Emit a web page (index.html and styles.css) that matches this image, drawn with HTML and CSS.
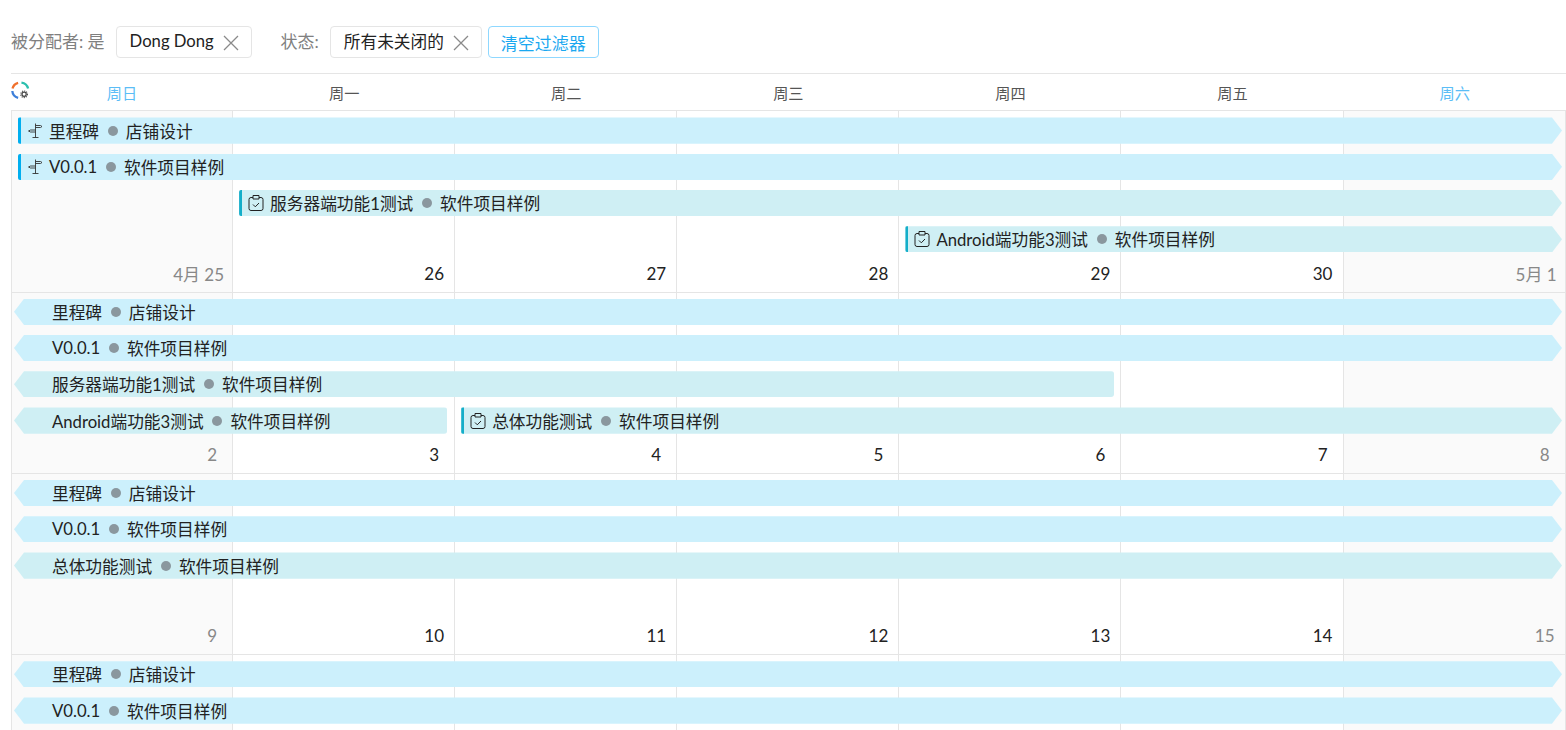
FILE: index.html
```html
<!DOCTYPE html>
<html lang="zh">
<head>
<meta charset="utf-8">
<title>日历</title>
<link rel="stylesheet" href="styles.css">
</head>
<body>
<svg class="defs" width="0" height="0" aria-hidden="true">
  <symbol id="sign" viewBox="0 0 16 16">
    <path d="M8.500 0.500v14M5.500 14.500h6M8.500 2.500h5l1.500 1-1.500 1h-5M8.500 7h-5L1.500 8l2 1h5" fill="none" stroke="#333" stroke-width="0.900"/>
  </symbol>
  <symbol id="task" viewBox="0 0 16 16">
    <path d="M5 2.500H3A2 2 0 0 0 1 4.500v9A2 2 0 0 0 3 15.500h10A2 2 0 0 0 15 13.500v-9A2 2 0 0 0 13 2.500h-2M5 .5h6v3.500H5zM5 9.500l2.300 2.300L11 8" fill="none" stroke="#222" stroke-width="1"/>
  </symbol>
  <symbol id="close" viewBox="0 0 18 18">
    <path d="M2 2l14 14M16 2L2 16" fill="none" stroke="#8a8a8a" stroke-width="1.300"/>
  </symbol>
</svg>

<div class="filters">
  <span class="flabel">被分配者: 是</span>
  <span class="tag tag-a">Dong Dong<svg class="x"><use href="#close"/></svg></span>
  <span class="flabel flabel-b">状态:</span>
  <span class="tag tag-b">所有未关闭的<svg class="x"><use href="#close"/></svg></span>
  <button class="clear">清空过滤器</button>
</div>

<div class="calendar">
  <div class="weekhead">
    <svg class="logo" viewBox="0 0 20 20">
      <path d="M1.600 8A8 8 0 0 1 7.500 1.900" fill="none" stroke="#f0702c" stroke-width="2.400"/>
      <path d="M11 1.600A8.200 8.200 0 0 1 18 8" fill="none" stroke="#2bbfae" stroke-width="2.400"/>
      <path d="M1.400 10.500A8.200 8.200 0 0 0 7.500 17.800" fill="none" stroke="#3d7fd9" stroke-width="2.400"/>
      <circle cx="13.800" cy="14" r="2.200" fill="none" stroke="#444" stroke-width="1.300"/>
      <circle cx="13.800" cy="14" r="3.500" fill="none" stroke="#444" stroke-width="1.100" stroke-dasharray="1.200 1.100"/>
    </svg>
    <div class="wd end">周日</div>
    <div class="wd">周一</div>
    <div class="wd">周二</div>
    <div class="wd">周三</div>
    <div class="wd">周四</div>
    <div class="wd">周五</div>
    <div class="wd end">周六</div>
  </div>

  <div class="week">
    <div class="cell off c1"></div><div class="cell c2"></div><div class="cell c3"></div><div class="cell c4"></div><div class="cell c5"></div><div class="cell c6"></div><div class="cell off c7"></div>
    <div class="bar ms head first r1 s1 e8"><svg class="ic"><use href="#sign"/></svg><span>里程碑</span><i class="dot"></i><span>店铺设计</span></div>
    <div class="bar ms head first r2 s1 e8"><svg class="ic"><use href="#sign"/></svg><span>V0.0.1</span><i class="dot"></i><span>软件项目样例</span></div>
    <div class="bar tk head r3 s2 e8"><svg class="ic"><use href="#task"/></svg><span>服务器端功能1测试</span><i class="dot"></i><span>软件项目样例</span></div>
    <div class="bar tk head r4 s5 e8"><svg class="ic"><use href="#task"/></svg><span>Android端功能3测试</span><i class="dot"></i><span>软件项目样例</span></div>
    <div class="date muted c1">4月 25</div><div class="date c2">26</div><div class="date c3">27</div><div class="date c4">28</div><div class="date c5">29</div><div class="date c6">30</div><div class="date muted c7">5月 1</div>
  </div>

  <div class="week">
    <div class="cell off c1"></div><div class="cell c2"></div><div class="cell c3"></div><div class="cell c4"></div><div class="cell c5"></div><div class="cell c6"></div><div class="cell off c7"></div>
    <div class="bar ms cont r1 s1 e8"><span>里程碑</span><i class="dot"></i><span>店铺设计</span></div>
    <div class="bar ms cont r2 s1 e8"><span>V0.0.1</span><i class="dot"></i><span>软件项目样例</span></div>
    <div class="bar tk cont stop r3 s1 e6"><span>服务器端功能1测试</span><i class="dot"></i><span>软件项目样例</span></div>
    <div class="bar tk cont stop r4 s1 e3"><span>Android端功能3测试</span><i class="dot"></i><span>软件项目样例</span></div>
    <div class="bar tk head r4 s3 e8"><svg class="ic"><use href="#task"/></svg><span>总体功能测试</span><i class="dot"></i><span>软件项目样例</span></div>
    <div class="date muted c1">2</div><div class="date c2">3</div><div class="date c3">4</div><div class="date c4">5</div><div class="date c5">6</div><div class="date c6">7</div><div class="date muted c7">8</div>
  </div>

  <div class="week">
    <div class="cell off c1"></div><div class="cell c2"></div><div class="cell c3"></div><div class="cell c4"></div><div class="cell c5"></div><div class="cell c6"></div><div class="cell off c7"></div>
    <div class="bar ms cont r1 s1 e8"><span>里程碑</span><i class="dot"></i><span>店铺设计</span></div>
    <div class="bar ms cont r2 s1 e8"><span>V0.0.1</span><i class="dot"></i><span>软件项目样例</span></div>
    <div class="bar tk cont r3 s1 e8"><span>总体功能测试</span><i class="dot"></i><span>软件项目样例</span></div>
    <div class="date muted c1">9</div><div class="date c2">10</div><div class="date c3">11</div><div class="date c4">12</div><div class="date c5">13</div><div class="date c6">14</div><div class="date muted c7">15</div>
  </div>

  <div class="week">
    <div class="cell off c1"></div><div class="cell c2"></div><div class="cell c3"></div><div class="cell c4"></div><div class="cell c5"></div><div class="cell c6"></div><div class="cell off c7"></div>
    <div class="bar ms cont r1 s1 e8"><span>里程碑</span><i class="dot"></i><span>店铺设计</span></div>
    <div class="bar ms cont r2 s1 e8"><span>V0.0.1</span><i class="dot"></i><span>软件项目样例</span></div>
  </div>
</div>
</body>
</html>
```
FILE: styles.css
```css
* { box-sizing: border-box; }
html, body { height: 730px; overflow: hidden; }
body {
  margin: 0;
  background: #fff;
  color: #222;
  font-family: Lato, "Noto Sans CJK SC", sans-serif;
  font-size: 16.7px;
}
.defs { position: absolute; }

.filters {
  height: 74px;
  margin-left: 11px;
  padding-top: 26px;
  border-bottom: 1px solid #e5e5e5;
  display: flex;
  align-items: flex-start;
}
.flabel { height: 32px; line-height: 32px; color: #808080; font-size: 17px; margin-right: 11px; white-space: nowrap; }
.flabel-b { margin-left: 29px; margin-right: 11px; }
.tag {
  height: 32px;
  border: 1px solid #e5e5e5;
  border-radius: 4px;
  display: flex;
  align-items: center;
  padding-left: 13px;
  padding-bottom: 2px;
  font-size: 16.67px;
  white-space: nowrap;
}
.tag-a { width: 136px; }
.tag-b { width: 152px; }
.x { width: 18px; height: 18px; margin-left: 8px; margin-top: 3px; flex: none; }
.clear {
  height: 32px;
  width: 111px;
  margin-left: 6px;
  padding: 0;
  background: #fff;
  border: 1px solid #8fd8ff;
  border-radius: 4px;
  color: #1aa8f0;
  font: inherit;
  font-size: 17px;
}

.calendar { width: 1554.7px; margin-left: 11px; }
.weekhead {
  height: 36.3px;
  position: relative;
  display: grid;
  grid-template-columns: repeat(7, 1fr);
  align-items: center;
  text-align: center;
  font-size: 15.2px;
  color: #555;
}
.logo { position: absolute; left: 0; top: 7px; width: 19px; height: 19px; }
.wd.end { color: #5bbdf6; }

.week {
  display: grid;
  grid-template-columns: repeat(7, 1fr);
  grid-template-rows: repeat(5, 36.26px);
}
.cell {
  grid-row: 1 / -1;
  border-top: 1px solid #e5e5e5;
  border-right: 1px solid #e5e5e5;
}
.cell.c1 { border-left: 1px solid #e5e5e5; }
.cell.off { background: #fafafa; }
.c1 { grid-column: 1; }
.c2 { grid-column: 2; }
.c3 { grid-column: 3; }
.c4 { grid-column: 4; }
.c5 { grid-column: 5; }
.c6 { grid-column: 6; }
.c7 { grid-column: 7; }

.date {
  grid-row: 5;
  align-self: center;
  justify-self: end;
  min-width: 24px;
  margin-right: 9px;
  text-align: center;
  font-size: 17px;
  color: #222;
  z-index: 1;
}
.date.muted { color: #888; }

.bar {
  z-index: 1;
  height: 26.26px;
  margin-top: 7.200px;
  display: flex;
  align-items: center;
  white-space: nowrap;
  overflow: hidden;
  color: #222;
  margin-left: 6px;
  margin-right: 3.700px;
  clip-path: polygon(0 0, calc(100% - 10px) 0, 100% 50%, calc(100% - 10px) 100%, 0 100%);
}
.ms { background: #ccf0fc; }
.tk { background: #cfeff4; }
.r1 { grid-row: 1; }
.r2 { grid-row: 2; }
.r3 { grid-row: 3; }
.r4 { grid-row: 4; }
.s1 { grid-column-start: 1; }
.s2 { grid-column-start: 2; }
.s3 { grid-column-start: 3; }
.s5 { grid-column-start: 5; }
.e3 { grid-column-end: 3; }
.e6 { grid-column-end: 6; }
.e8 { grid-column-end: 8; }

.head { padding-left: 6px; border-left: 3px solid #14aec9; border-radius: 2px 0 0 2px; }
.ms.head { border-left-color: #00aeef; }
.first { margin-left: 7px; }
.cont {
  margin-left: 3px;
  padding-left: 38px;
  clip-path: polygon(10px 0, calc(100% - 10px) 0, 100% 50%, calc(100% - 10px) 100%, 10px 100%, 0 50%);
}
.stop {
  margin-right: 8px;
  border-radius: 0 3px 3px 0;
  clip-path: polygon(10px 0, 100% 0, 100% 100%, 10px 100%, 0 50%);
}
.stop.e6 { margin-right: 7px; }
.ic { width: 16px; height: 16px; flex: none; margin-right: 6px; }
.dot { width: 10px; height: 10px; border-radius: 50%; background: #8a979e; margin: 0 8.200px 0 8.600px; flex: none; }
```
